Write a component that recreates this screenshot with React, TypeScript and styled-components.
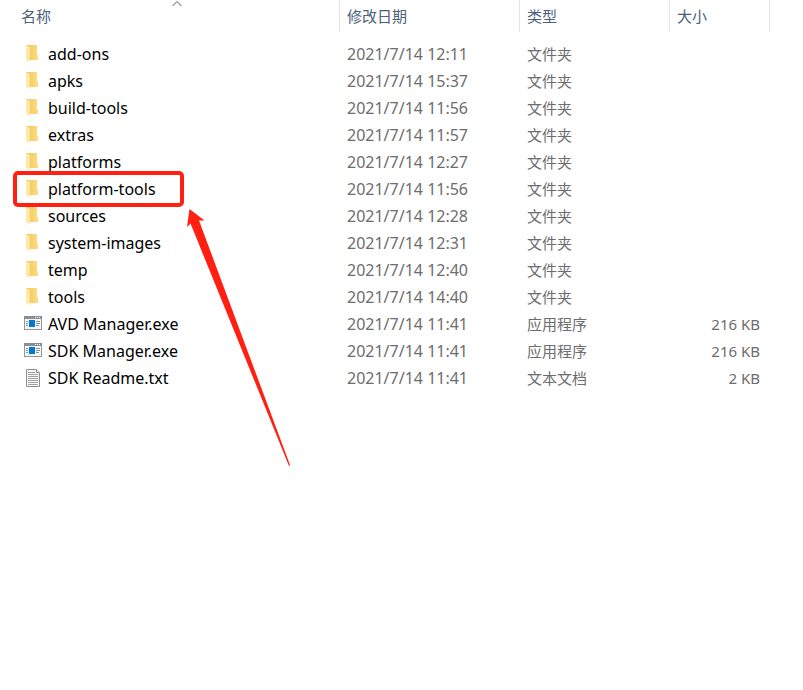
import React from "react";
import styled, { createGlobalStyle } from "styled-components";

const GlobalStyle = createGlobalStyle`
  body {
    margin: 0;
    background: #fff;
    font-family: "Noto Sans", "Noto Sans CJK SC", sans-serif;
    font-size: 15px;
    line-height: 27px;
  }
`;

const Pane = styled.main`
  box-sizing: border-box;
  min-height: 100vh;
  padding-right: 33px;
`;

const FileTable = styled.table`
  width: 100%;
  table-layout: fixed;
  border-collapse: separate;
  border-spacing: 0;
`;

const Column = styled.col<{ $width?: number }>`
  width: ${({ $width }) => ($width ? `${$width}px` : "auto")};
`;

const HeaderCell = styled.th<{ $indent: number }>`
  position: relative;
  box-sizing: border-box;
  height: 32px;
  padding: 0 0 0 ${({ $indent }) => $indent}px;
  border-right: 1px solid #e5e5e5;
  text-align: left;
  vertical-align: middle;
`;

const SortButton = styled.button`
  display: block;
  width: 100%;
  padding: 0;
  border: 0;
  background: none;
  color: #4c607a;
  font: inherit;
  font-weight: 400;
  line-height: 32px;
  text-align: left;
`;

const SortMark = styled.svg`
  position: absolute;
  top: 0;
  left: calc(50% + 1px);
  width: 12px;
  height: 8px;
`;

const Rows = styled.tbody`
  &::before {
    content: "";
    display: block;
    height: 9px;
  }
`;

const Cell = styled.td<{ $align?: "right" }>`
  height: 27px;
  padding: 0 ${({ $align }) => ($align ? 10 : 0)}px 0 7px;
  color: #6d6d6d;
  text-align: ${({ $align }) => $align ?? "left"};
  white-space: nowrap;
`;

const DateCell = styled(Cell)`
  font-size: 16px;
`;

const NameCell = styled.td`
  position: relative;
  height: 27px;
  padding: 0 0 0 24px;
`;

const FileName = styled.div`
  display: flex;
  align-items: center;
  gap: 6px;
  height: 27px;
  color: #000;
  font-size: 16px;
  white-space: nowrap;
`;

const Icon = styled.svg`
  flex: none;
  width: 18px;
  height: 19px;
`;

const Highlight = styled.div`
  position: absolute;
  z-index: 1;
  top: -5px;
  left: 13px;
  box-sizing: border-box;
  width: 171px;
  height: 36px;
  border: 4px solid #ff2012;
  border-radius: 5px;
  pointer-events: none;
`;

const Arrow = styled.svg`
  position: absolute;
  z-index: 1;
  top: 32px;
  left: 186px;
  width: 106px;
  height: 260px;
  pointer-events: none;
`;

type Kind = "folder" | "exe" | "txt";

function FolderIcon() {
  return (
    <Icon viewBox="0 0 18 19" aria-hidden="true">
      <defs>
        <linearGradient id="folder-back" x1="0" x2="1" y1="0" y2="0">
          <stop offset="0" stopColor="#efc65c" />
          <stop offset="1" stopColor="#ffdc82" />
        </linearGradient>
      </defs>
      <path d="M2 0H13V10H14V15H2Z" fill="url(#folder-back)" />
      <path d="M2 0L5.800 2V17L2 15Z" fill="#ffe9a6" />
    </Icon>
  );
}

function ProgramIcon() {
  return (
    <Icon viewBox="0 0 18 19" aria-hidden="true">
      <rect x="0.500" y="1.500" width="17" height="13" fill="#f6f6f6" stroke="#92979b" />
      <rect x="0" y="1" width="18" height="3" fill="#898f94" />
      <path d="M11 2h1v1h-1zM13 2h1v1h-1zM15 2h1v1h-1z" fill="#fff" />
      <rect x="5" y="5" width="6" height="7" fill="#0078d7" />
      <path d="M2 6.500H4M2 8.500H4M2 10.500H4M12 6.500H16M12 8.500H16M12 10.500H15" stroke="#8c9195" />
    </Icon>
  );
}

function TextIcon() {
  return (
    <Icon viewBox="0 0 18 19" aria-hidden="true">
      <path d="M2.500 0.500H12.500L15.500 3.500V17.500H2.500Z" fill="#f7f7f7" stroke="#8f8f8f" />
      <path d="M12.500 0.500V3.500H15.500" fill="#fff" stroke="#8f8f8f" />
      <path d="M4 3.500H11M4 5.500H14M4 7.500H14M4 9.500H14M4 11.500H14M4 13.500H14M4 15.500H14" stroke="#a3a3a3" />
    </Icon>
  );
}

const icons: Record<Kind, React.ComponentType> = {
  folder: FolderIcon,
  exe: ProgramIcon,
  txt: TextIcon,
};

const typeNames: Record<Kind, string> = {
  folder: "文件夹",
  exe: "应用程序",
  txt: "文本文档",
};

interface FileEntry {
  name: string;
  date: string;
  kind: Kind;
  size?: string;
  marked?: boolean;
}

const files: FileEntry[] = [
  { name: "add-ons", date: "2021/7/14 12:11", kind: "folder" },
  { name: "apks", date: "2021/7/14 15:37", kind: "folder" },
  { name: "build-tools", date: "2021/7/14 11:56", kind: "folder" },
  { name: "extras", date: "2021/7/14 11:57", kind: "folder" },
  { name: "platforms", date: "2021/7/14 12:27", kind: "folder" },
  { name: "platform-tools", date: "2021/7/14 11:56", kind: "folder", marked: true },
  { name: "sources", date: "2021/7/14 12:28", kind: "folder" },
  { name: "system-images", date: "2021/7/14 12:31", kind: "folder" },
  { name: "temp", date: "2021/7/14 12:40", kind: "folder" },
  { name: "tools", date: "2021/7/14 14:40", kind: "folder" },
  { name: "AVD Manager.exe", date: "2021/7/14 11:41", kind: "exe", size: "216 KB" },
  { name: "SDK Manager.exe", date: "2021/7/14 11:41", kind: "exe", size: "216 KB" },
  { name: "SDK Readme.txt", date: "2021/7/14 11:41", kind: "txt", size: "2 KB" },
];

function FileRow({ file }: { file: FileEntry }) {
  const KindIcon = icons[file.kind];
  return (
    <tr>
      <NameCell>
        <FileName>
          <KindIcon />
          {file.name}
        </FileName>
        {file.marked && (
          <>
            <Highlight />
            <Arrow viewBox="0 0 106 260" aria-hidden="true">
              <path d="M3.500 1L18.500 12.500L13 12.500L104 257L103 258L4.500 15.500L1 19Z" fill="#ff2012" />
            </Arrow>
          </>
        )}
      </NameCell>
      <DateCell>{file.date}</DateCell>
      <Cell>{typeNames[file.kind]}</Cell>
      <Cell $align="right">{file.size}</Cell>
    </tr>
  );
}

export default function App() {
  return (
    <>
      <GlobalStyle />
      <Pane>
        <FileTable>
          <colgroup>
            <Column />
            <Column $width={180} />
            <Column $width={150} />
            <Column $width={100} />
          </colgroup>
          <thead>
            <tr>
              <HeaderCell $indent={21} aria-sort="ascending">
                <SortButton type="button">名称</SortButton>
                <SortMark viewBox="0 0 12 8" aria-hidden="true">
                  <path d="M1.500 6L6 1.500L10.500 6" fill="none" stroke="#5c5c5c" />
                </SortMark>
              </HeaderCell>
              <HeaderCell $indent={7}>
                <SortButton type="button">修改日期</SortButton>
              </HeaderCell>
              <HeaderCell $indent={7}>
                <SortButton type="button">类型</SortButton>
              </HeaderCell>
              <HeaderCell $indent={7}>
                <SortButton type="button">大小</SortButton>
              </HeaderCell>
            </tr>
          </thead>
          <Rows>
            {files.map((file) => (
              <FileRow key={file.name} file={file} />
            ))}
          </Rows>
        </FileTable>
      </Pane>
    </>
  );
}
